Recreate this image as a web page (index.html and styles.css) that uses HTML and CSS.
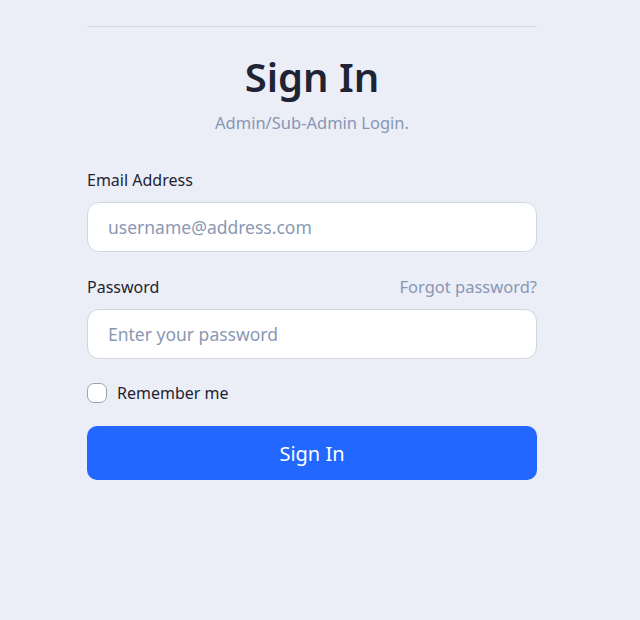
FILE: index.html
```html
<!DOCTYPE html>
<html lang="en">
<head>
<meta charset="utf-8">
<title>Sign In</title>
<link rel="stylesheet" href="styles.css">
</head>
<body>
<main class="auth">
  <hr class="rule">
  <h1 class="title">Sign In</h1>
  <p class="subtitle">Admin/Sub-Admin Login.</p>
  <form class="form">
    <div class="field">
      <label class="label" for="email">Email Address</label>
      <input class="input" id="email" type="email" placeholder="username@address.com">
    </div>
    <div class="field">
      <div class="label-row">
        <label class="label" for="pw">Password</label>
        <a class="forgot" href="#">Forgot password?</a>
      </div>
      <input class="input" id="pw" type="password" placeholder="Enter your password">
    </div>
    <label class="remember"><span class="check"></span><span>Remember me</span></label>
    <button class="btn" type="button">Sign In</button>
  </form>
</main>
</body>
</html>
```
FILE: styles.css
```css
* { box-sizing: border-box; }
html, body { margin: 0; background: #ebeef6; }
body { font-family: "Noto Sans", "Open Sans", sans-serif; color: #1e2433; }
.auth { width: 450px; margin-left: 87px; padding-top: 26px; }
.rule { margin: 0; border: 0; border-top: 1px solid #d3d8e2; }
.title { margin: 24px 0 0; text-align: center; font-size: 40px; font-weight: 600; line-height: 52px; color: #1e2433; }
.subtitle { margin: 9px 0 0; text-align: center; font-size: 16.5px; line-height: 22px; color: #8796b5; }
.form { margin-top: 35px; display: flex; flex-direction: column; }
.field { display: flex; flex-direction: column; gap: 11px; margin-bottom: 23px; }
.label { font-size: 16px; line-height: 22px; color: #1e2433; }
.label-row { display: flex; justify-content: space-between; align-items: center; }
.forgot { font-size: 16.5px; color: #8796b5; text-decoration: none; }
.input { height: 50px; border: 1px solid #d2d6e0; border-radius: 12px; background: #fff; padding: 0 20px; font: inherit; font-size: 17.5px; color: #1e2433; }
.input::placeholder { color: #8a98b4; }
.remember { display: flex; align-items: center; gap: 10px; font-size: 16px; line-height: 22px; margin-top: 0; }
.check { width: 20px; height: 20px; border: 1px solid #9aa3b5; border-radius: 7px; background: #fff; }
.btn { margin-top: 22px; height: 54px; border: 0; border-radius: 10px; background: #2267ff; color: #fff; font: inherit; font-size: 20px; }
```
